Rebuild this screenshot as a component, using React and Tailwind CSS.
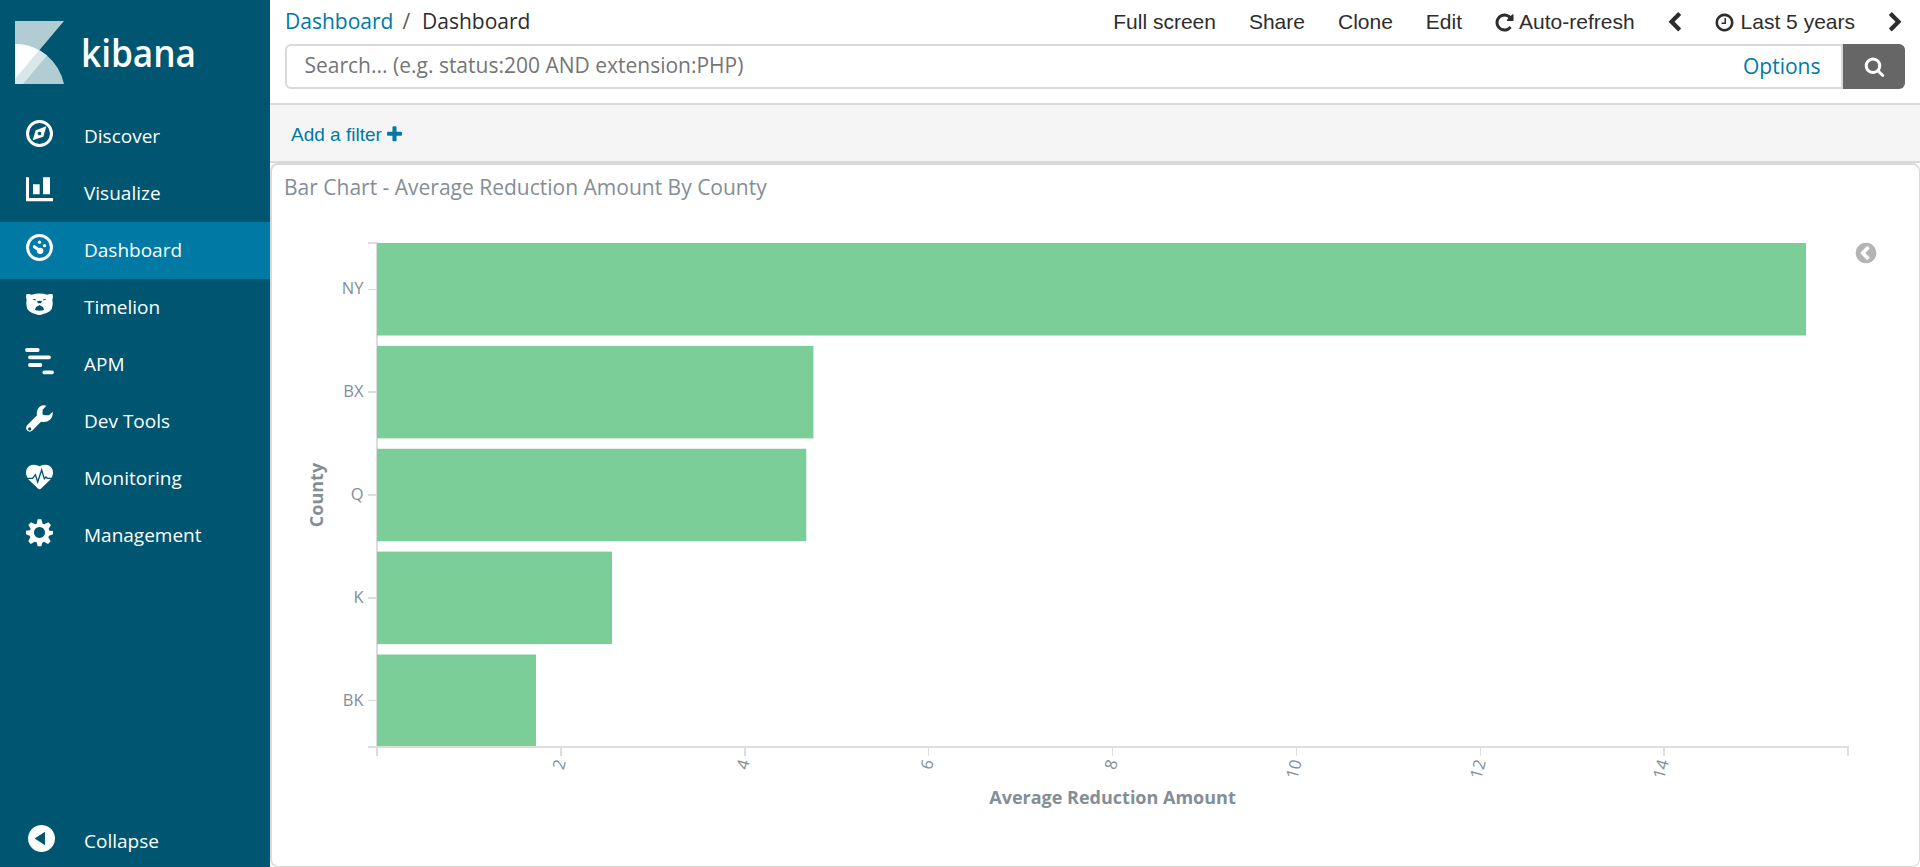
import React from "react";

const FA = {
  repeat: "M1664 256v448q0 26-19 45t-45 19h-448q-42 0-59-40-17-39 14-69l138-138q-148-137-349-137-104 0-198.500 40.500t-163.500 109.500-109.500 163.500-40.500 198.500 40.500 198.500 109.500 163.500 163.500 109.500 198.500 40.500q119 0 225-52t179-147q7-10 23-12 15 0 25 9l137 138q9 8 9.500 20.500t-7.500 22.500q-109 132-264 204.500t-327 72.500q-156 0-298-61t-245-164-164-245-61-298 61-298 164-245 245-164 298-61q147 0 284.500 55.500t244.500 156.500l130-129q29-31 70-14 39 17 39 59z",
  clock: "M1024 544v448q0 14-9 23t-23 9h-320q-14 0-23-9t-9-23v-64q0-14 9-23t23-9h224v-352q0-14 9-23t23-9h64q14 0 23 9t9 23zm416 352q0-148-73-273t-198-198-273-73-273 73-198 198-73 273 73 273 198 198 273 73 273-73 198-198 73-273zm224 0q0 209-103 385.500t-279.500 279.500-385.500 103-385.500-103-279.500-279.500-103-385.500 103-385.500 279.500-279.500 385.500-103 385.500 103 279.500 279.500 103 385.500z",
  left: "M1427 301l-531 531 531 531q19 19 19 45t-19 45l-166 166q-19 19-45 19t-45-19l-742-742q-19-19-19-45t19-45l742-742q19-19 45-19t45 19l166 166q19 19 19 45t-19 45z",
  right: "M1363 877l-742 742q-19 19-45 19t-45-19l-166-166q-19-19-19-45t19-45l531-531-531-531q-19-19-19-45t19-45l166-166q19-19 45-19t45 19l742 742q19 19 19 45t-19 45z",
  search: "M1216 832q0-185-131.500-316.500t-316.500-131.500-316.500 131.500-131.500 316.500 131.500 316.500 316.500 131.500 316.500-131.500 131.500-316.500zm512 832q0 52-38 90t-90 38q-54 0-90-38l-343-342q-179 124-399 124-143 0-273.500-55.500t-225-150-150-225-55.500-273.500 55.500-273.500 150-225 225-150 273.500-55.500 273.500 55.500 225 150 150 225 55.500 273.500q0 220-124 399l343 343q37 37 37 90z",
  plus: "M1600 736v192q0 40-28 68t-68 28h-416v416q0 40-28 68t-68 28h-192q-40 0-68-28t-28-68v-416h-416q-40 0-68-28t-28-68v-192q0-40 28-68t68-28h416v-416q0-40 28-68t68-28h192q40 0 68 28t28 68v416h416q40 0 68 28t28 68z",
  circleLeft: "M1037 1395l102-102q19-19 19-45t-19-45l-307-307 307-307q19-19 19-45t-19-45l-102-102q-19-19-45-19t-45 19l-454 454q-19 19-19 45t19 45l454 454q19 19 45 19t45-19zm627-499q0 209-103 385.500t-279.500 279.500-385.500 103-385.500-103-279.500-279.500-103-385.500 103-385.500 279.500-279.500 385.500-103 385.500 103 279.500 279.500 103 385.500z",
};

function Icon({ name, className }) {
  return (
    <svg viewBox="0 0 1792 1792" className={className} fill="currentColor" aria-hidden="true">
      <path d={FA[name]} />
    </svg>
  );
}

/* Navigation glyphs share an 81-unit grid, drawn at 27px. */
const glyphs = {
  discover: (
    <>
      <circle cx="40.500" cy="40.500" r="36" fill="none" stroke="#fff" strokeWidth="9" />
      <path fillRule="evenodd" d="M61 19 52 50 20 61 29 31ZM40.500 35a5.500 5.500 0 1 0 .01 0Z" />
    </>
  ),
  visualize: <path d="M0 1h9v62h72v10H0ZM21 22h20v30H21ZM51 1h21v51H51Z" />,
  dashboard: (
    <>
      <circle cx="40.500" cy="40.500" r="36" fill="none" stroke="#fff" strokeWidth="9" />
      <circle cx="40.500" cy="24.500" r="5" />
      <circle cx="55.500" cy="35" r="5" />
      <circle cx="42.500" cy="50.500" r="9.500" />
      <path d="M25 38 42 50" fill="none" stroke="#fff" strokeWidth="9" strokeLinecap="round" />
    </>
  ),
  timelion: (
    <path
      transform="translate(0 3)"
      fillRule="evenodd"
      d="M1 7Q8 4 17 8Q40 1 64 8Q73 4 80 7Q82 13 79 25Q82 34 79 43Q80 51 71 58Q62 65 52 66Q40 72 28 66Q18 65 10 58Q1 51 2 43Q-1 34 2 25Q-1 13 1 7ZM20 22Q26 19 31 24Q25 26 20 22ZM50 24Q55 19 61 22Q56 26 50 24ZM32 28Q40 24 49 28L44 34H37ZM27 54Q28 44 36 42L40.500 39 45 42Q53 44 54 54Q40 59 27 54Z"
    />
  ),
  apm: (
    <path d="M3 6H35M12 28H69M12 51H43M55 73H78" fill="none" stroke="#fff" strokeWidth="11.500" strokeLinecap="round" />
  ),
  tools: (
    <path
      fillRule="evenodd"
      d="M61 2Q51-2 41 5Q30 14 33 31L4 60Q-3 68 3 76Q11 84 20 76L45 50Q62 53 72 44Q82 34 80 20L69 31Q59 31 50 29Q49 20 50 14ZM11 67a5 5 0 1 0 .01 0Z"
    />
  ),
  monitoring: (
    <g transform="translate(0 4)">
      <path d="M40.500 78Q37 78 35 75L9 50Q-3 36 1 20Q7 4 24 4Q34 4 40.500 9Q47 4 57 4Q74 4 80 20Q84 36 72 50L46 75Q44 78 40.500 78Z" />
      <path d="M0 45H20L28 34 35 56 47 20 55 46 60 41 64 45H81" fill="none" stroke="#005571" strokeWidth="4" />
    </g>
  ),
  management: (
    <path
      fillRule="evenodd"
      d="M35 1h11l4 13 5 2 12-6 8 8-7 11 2 6 11 1v10l-12 4-2 5 7 12-8 8-12-7-5 3-3 11H35l-3-12-6-2-12 7-7-8 6-12-2-5-11-4V35l12-1 2-5-7-11 8-8 12 6 5-2ZM40.500 24a16.500 16.500 0 1 0 .01 0Z"
    />
  ),
};

const nav = [
  ["discover", "Discover"],
  ["visualize", "Visualize"],
  ["dashboard", "Dashboard"],
  ["timelion", "Timelion"],
  ["apm", "APM"],
  ["tools", "Dev Tools"],
  ["monitoring", "Monitoring"],
  ["management", "Management"],
];

function Sidebar() {
  return (
    <aside className="flex h-full w-[270px] shrink-0 flex-col bg-[#005571] text-[19px] text-white">
      <div className="h-[108px]">
        <svg width="270" height="108" viewBox="0 0 270 108">
          <path d="M15 21H64L15 79Z" fill="#b2ccd4" />
          <path d="M15 44A50 50 0 0 1 64 84H15Z" fill="#b2ccd4" />
          <path d="M15 44A50 50 0 0 1 47 55.600L23 84H15Z" fill="#d9e6ea" />
          <path d="M15 44A50 50 0 0 1 39 50.200L15 79Z" fill="#fff" />
          <text x="81" y="66.500" fontSize="38" fontWeight="600" textLength="115" lengthAdjust="spacingAndGlyphs" fill="#fff">
            kibana
          </text>
        </svg>
      </div>
      <nav>
        {nav.map(([id, label]) => (
          <a
            key={id}
            className={
              "flex h-[57px] items-center pl-[26px] " + (id === "dashboard" ? "bg-[#0079a5]" : "")
            }
          >
            <svg width="27" height="27" viewBox="0 0 81 81" fill="#fff" className="mb-[6px] overflow-visible">
              {glyphs[id]}
            </svg>
            <span className="pb-[2px] pl-[31px]">{label}</span>
          </a>
        ))}
      </nav>
      <a className="mt-auto mb-[-3px] flex h-[57px] items-center pl-7">
        <svg width="27" height="27" viewBox="0 0 81 81" fill="#fff" className="mb-[6px]">
          <path fillRule="evenodd" d="M40.500 0a40.500 40.500 0 1 0 .01 0ZM51 20V61L20 40.500Z" />
        </svg>
        <span className="pb-[2px] pl-[29px]">Collapse</span>
      </a>
    </aside>
  );
}

function Header() {
  return (
    <header className="flex h-[105px] flex-col border-b-2 border-[#d9d9d9] pl-[15px] pr-[15px] text-[21px] text-[#2d2d2d]">
      <div className="flex h-[44px] items-center justify-between">
        <div className="flex pb-[2px]">
          <span className="text-[#0079a5]">Dashboard</span>
          <span className="pl-[9px] text-[#5a5a5a]">/</span>
          <span className="pl-[12px]">Dashboard</span>
        </div>
        <div className="mr-[-1px] flex items-center font-['Liberation_Sans',Arial,sans-serif]">
          <span className="mr-[33px]">Full screen</span>
          <span className="mr-[33px]">Share</span>
          <span className="mr-[33px]">Clone</span>
          <span className="mr-[32px]">Edit</span>
          <Icon name="repeat" className="mr-[4px] size-[21px]" />
          <span className="mr-[29px]">Auto-refresh</span>
          <Icon name="left" className="mr-[29px] size-[21px]" />
          <Icon name="clock" className="mr-[6px] size-[21px]" />
          <span className="mr-[30px]">Last 5 years</span>
          <Icon name="right" className="size-[21px]" />
        </div>
      </div>
      <div className="flex h-[45px]">
        <div className="flex flex-1 items-center justify-between rounded-l-md border-2 border-[#d9d9d9] pr-[20.5px] pl-[17.5px]">
          <span className="pb-[4px] text-[#757575]">Search... (e.g. status:200 AND extension:PHP)</span>
          <span className="pb-[2px] text-[#0079a5]">Options</span>
        </div>
        <button className="flex w-[62px] items-center justify-center rounded-r-md bg-[#666] text-white">
          <Icon name="search" className="size-[21px]" />
        </button>
      </div>
    </header>
  );
}

const bars = [
  ["NY", 243, 1806, 289],
  ["BX", 345.87, 813.4, 391.500],
  ["Q", 448.75, 806.3, 494.500],
  ["K", 551.6, 612, 597.500],
  ["BK", 654.5, 536, 700],
];

const ticks = [
  [2, 560, 2],
  [4, 744, 2],
  [6, 928, 1],
  [8, 1112, 1],
  [10, 1296, 1],
  [12, 1480, 1],
  [14, 1663, 2],
];

function BarChart() {
  return (
    <svg width="1646" height="664" viewBox="272 201 1646 664" className="block shrink-0">
      <g fill="#ddd">
        <rect x="376" y="242" width="2" height="506" />
        <rect x="368" y="242" width="10" height="2" />
        <rect x="368" y="746" width="1481" height="2" />
        <rect x="376" y="746" width="2" height="10" />
        <rect x="1847" y="746" width="2" height="10" />
        {bars.map(([name, , , y]) => (
          <rect key={name} x="368" y={Math.floor(y)} width="8" height={y % 1 ? 2 : 1} />
        ))}
        {ticks.map(([v, x, w]) => (
          <rect key={v} x={x} y="748" width={w} height="8" />
        ))}
      </g>
      <g fill="#7bce97">
        {bars.map(([name, y, end]) => (
          <rect key={name} x="377" y={y} width={end - 377} height={Math.min(92.5, 746 - y)} />
        ))}
      </g>
      <g fill="#848e96" fontSize="16.5">
        {bars.map(([name, , , y]) => (
          <text key={name} x="363.5" y={name === "BK" ? 706 : Math.round(y + 5.2)} textAnchor="end">
            {name}
          </text>
        ))}
        {ticks.map(([v, x]) => (
          <text key={v} transform={`translate(${x + 6} 761.5) rotate(-75)`} textAnchor="end">
            {v}
          </text>
        ))}
      </g>
      <g fill="#848e96" fontSize="18" fontWeight="700" textAnchor="middle">
        <text x="1112.5" y="804">Average Reduction Amount</text>
        <text transform="translate(323 495) rotate(-90)">County</text>
      </g>
    </svg>
  );
}

export default function App() {
  return (
    <div className="flex h-[867px] w-[1920px] overflow-hidden bg-white font-['Open_Sans','Noto_Sans',sans-serif] leading-[30px]">
      <Sidebar />
      <main className="flex min-w-0 flex-1 flex-col">
        <Header />
        <div className="flex h-[58px] shrink-0 items-center gap-[3px] border-b-2 border-[#d9d9d9] bg-[#f5f5f5] pt-[3px] pl-[21px] font-['Liberation_Sans',Arial,sans-serif] text-[19px] text-[#0079a5]">
          <span>Add a filter</span>
          <Icon name="plus" className="size-[19px]" />
        </div>
        <section className="relative flex min-h-0 flex-1 flex-col rounded-lg border-2 border-r border-b border-[#d9d9d9]">
          <h2 className="h-[36px] pt-[7px] pl-[12px] text-[21px] text-[#848e96]">
            Bar Chart - Average Reduction Amount By County
          </h2>
          <BarChart />
          <Icon name="circleLeft" className="absolute top-[76px] right-[41px] size-[24px] text-[#b4b4b4]" />
        </section>
      </main>
    </div>
  );
}
